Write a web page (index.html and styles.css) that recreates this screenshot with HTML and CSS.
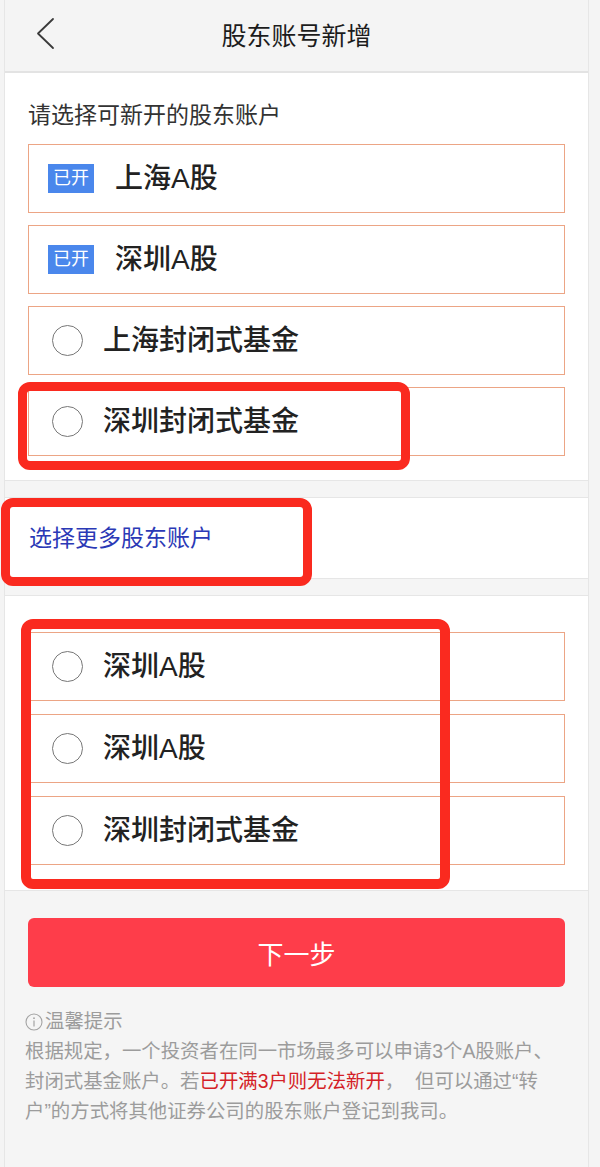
FILE: index.html
```html
<!DOCTYPE html>
<html lang="zh-CN">
<head>
<meta charset="utf-8">
<title>股东账号新增</title>
<link rel="stylesheet" href="styles.css">
</head>
<body>
<div class="page">
  <header class="topbar">
    <svg class="back" width="20" height="34" viewBox="0 0 20 34"><polyline points="17,2 2,16.5 17,31" fill="none" stroke="#3a3a3a" stroke-width="1.8" stroke-linecap="round" stroke-linejoin="round"/></svg>
    <h1 class="title">股东账号新增</h1>
    <span></span>
  </header>

  <section class="panel panel-main">
    <p class="label">请选择可新开的股东账户</p>
    <div class="option option-open"><span class="badge">已开</span><span class="name">上海A股</span></div>
    <div class="option option-open"><span class="badge">已开</span><span class="name">深圳A股</span></div>
    <div class="option"><span class="radio"></span><span class="name">上海封闭式基金</span></div>
    <div class="option"><span class="radio"></span><span class="name">深圳封闭式基金</span></div>
  </section>

  <section class="panel panel-more">
    <a class="more">选择更多股东账户</a>
  </section>

  <section class="panel panel-extra">
    <div class="option"><span class="radio"></span><span class="name">深圳A股</span></div>
    <div class="option"><span class="radio"></span><span class="name">深圳A股</span></div>
    <div class="option"><span class="radio"></span><span class="name">深圳封闭式基金</span></div>
  </section>

  <div class="actions">
    <button class="next">下一步</button>
  </div>

  <div class="tips">
    <div class="tips-title"><svg class="info" width="18" height="18" viewBox="0 0 18 18"><circle cx="9" cy="9" r="8" fill="none" stroke="#a3a3a3" stroke-width="1.1"/><circle cx="9" cy="5.2" r="0.9" fill="#a3a3a3"/><line x1="9" y1="7.6" x2="9" y2="13.4" stroke="#a3a3a3" stroke-width="1.2"/></svg>温馨提示</div>
    <p class="tips-text">根据规定，一个投资者在同一市场最多可以申请3个A股账户、<br>封闭式基金账户。若<span class="warn">已开满3户则无法新开</span>，&nbsp; 但可以通过“转<br>户”的方式将其他证券公司的股东账户登记到我司。</p>
  </div>

  <div class="mark mark-1"></div>
  <div class="mark mark-2"></div>
  <div class="mark mark-3"></div>
</div>
</body>
</html>
```

FILE: styles.css
```css
html, body {
  margin: 0;
  padding: 0;
  background: #f4f4f4;
}

body {
  font-family: "Liberation Sans", "Noto Sans CJK SC", sans-serif;
  color: #222;
}

.page {
  position: relative;
  margin-left: 4px;
  width: 585px;
  min-height: 1167px;
  box-sizing: border-box;
  border-left: 1px solid #e6e6e6;
  border-right: 1px solid #e6e6e6;
  background: #f5f5f5;
}

/* header */
.topbar {
  height: 71px;
  border-bottom: 2px solid #e3e3e3;
  background: #f4f4f4;
  display: grid;
  grid-template-columns: 1fr auto 1fr;
  align-items: center;
}

.back {
  margin-left: 31px;
  margin-top: -3px;
}

.title {
  margin: 0;
  font-size: 25px;
  font-weight: 400;
  color: #1c1c1c;
  line-height: 30px;
}

/* panels */
.panel {
  background: #fff;
  border-top: 1px solid #e6e6e6;
  border-bottom: 1px solid #e6e6e6;
}

.panel-main {
  border-top: none;
  padding: 27px 23px 24px;
  display: flex;
  flex-direction: column;
  gap: 12px;
}

.label {
  margin: 0 0 2px;
  font-size: 23px;
  line-height: 30px;
  color: #333;
}

.option {
  height: 69px;
  box-sizing: border-box;
  border: 1px solid #eca585;
  display: flex;
  align-items: center;
  padding-left: 23px;
}

.option-open {
  padding-left: 19px;
}

.badge {
  width: 46px;
  height: 29px;
  background: #4a87ec;
  color: #fff;
  font-size: 18px;
  line-height: 29px;
  text-align: center;
  margin-right: 21px;
}

.radio {
  width: 31px;
  height: 31px;
  box-sizing: border-box;
  border: 1.7px solid #777;
  border-radius: 50%;
  margin-right: 20px;
}

.name {
  font-size: 28px;
  font-weight: 500;
  line-height: 1;
  color: #222;
}

.panel-more {
  margin-top: 16px;
  height: 80px;
  display: flex;
  align-items: center;
  padding-left: 24px;
}

.more {
  font-size: 23px;
  color: #2b39b6;
  line-height: 30px;
}

.panel-extra {
  margin-top: 16px;
  padding: 36px 23px 25px;
  display: flex;
  flex-direction: column;
  gap: 13px;
}

/* button */
.actions {
  padding: 27px 23px 0;
}

.next {
  display: block;
  width: 100%;
  height: 69px;
  border: none;
  border-radius: 6px;
  background: #fe3d4a;
  color: #fff;
  font-family: "Noto Sans CJK SC", sans-serif;
  font-size: 26px;
  font-weight: 400;
}

/* tips */
.tips {
  padding: 20px 20px 0;
  color: #9c9c9c;
  font-size: 19.4px;
}

.tips-title {
  display: flex;
  align-items: center;
  gap: 2px;
  line-height: 29px;
}

.tips-text {
  margin: 0;
  line-height: 30px;
  white-space: nowrap;
}

.warn {
  color: #d41f27;
}

/* red annotation boxes */
.mark {
  position: absolute;
  box-sizing: border-box;
  border: 9px solid #fa2a1f;
  border-radius: 12px;
}

.mark-1 {
  left: 13px;
  top: 382px;
  width: 392px;
  height: 88px;
}

.mark-2 {
  left: -4px;
  top: 498px;
  width: 311px;
  height: 88px;
}

.mark-3 {
  left: 16px;
  top: 619px;
  width: 429px;
  height: 270px;
  border-width: 10px;
}
```
